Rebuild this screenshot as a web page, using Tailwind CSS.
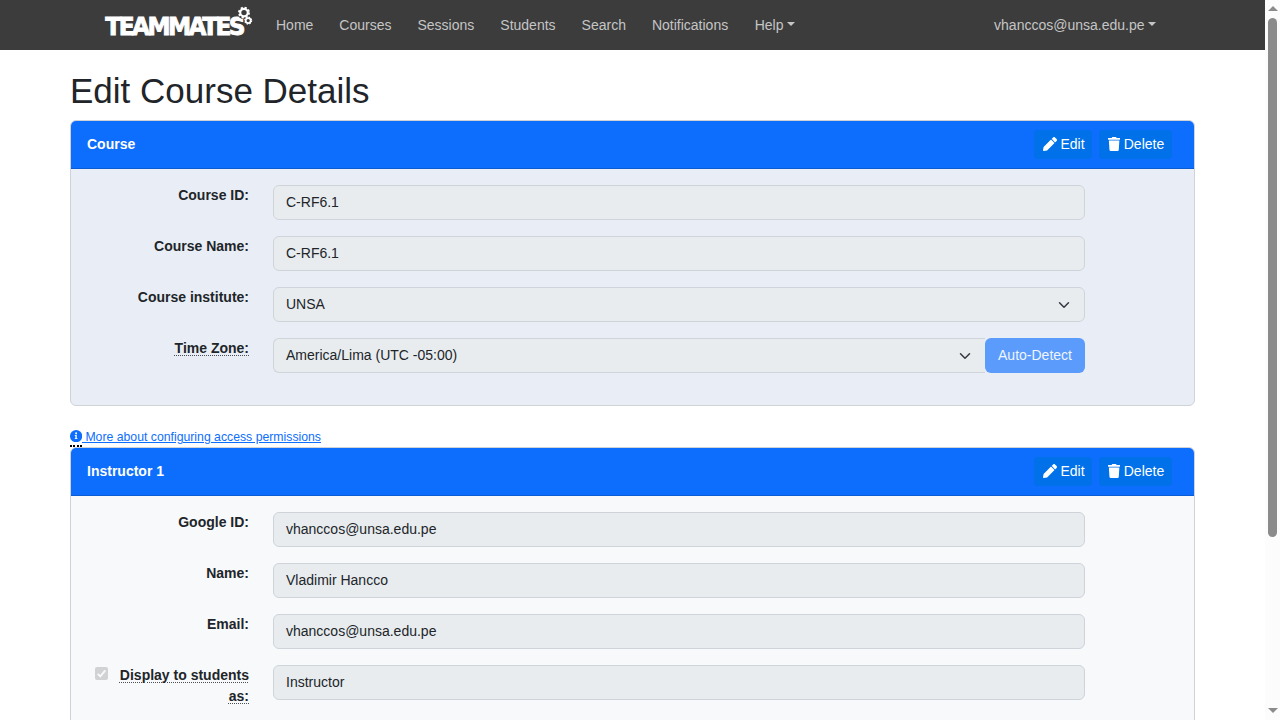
<!DOCTYPE html>
<html lang="en">
<head>
<meta charset="utf-8">
<title>Edit Course Details</title>
<script src="https://cdn.jsdelivr.net/npm/@tailwindcss/browser@4"></script>
</head>
<body class="h-[720px] overflow-hidden bg-white font-['Liberation_Sans',Arial,sans-serif] text-[14px] leading-[21px] text-[#212529]">
<svg class="hidden">
  <symbol id="pencil" viewBox="0 0 512 512"><path fill="currentColor" d="M497.9 142.1l-46.1 46.1c-4.7 4.7-12.3 4.7-17 0l-111-111c-4.7-4.7-4.7-12.3 0-17l46.1-46.1c18.7-18.7 49.1-18.7 67.9 0l60.1 60.1c18.8 18.7 18.8 49.1 0 67.9zM284.2 99.8L21.6 362.4.4 483.9c-2.9 16.4 11.4 30.6 27.8 27.8l121.5-21.3 262.6-262.6c4.7-4.7 4.7-12.3 0-17l-111-111c-4.8-4.7-12.4-4.7-17.1 0z"/></symbol>
  <symbol id="trash" viewBox="0 0 448 512"><path fill="currentColor" d="M432 32H312l-9.4-18.7A24 24 0 0 0 281.1 0H166.8a23.72 23.72 0 0 0-21.4 13.3L136 32H16A16 16 0 0 0 0 48v32a16 16 0 0 0 16 16h416a16 16 0 0 0 16-16V48a16 16 0 0 0-16-16zM53.2 467a48 48 0 0 0 47.9 45h245.8a48 48 0 0 0 47.9-45L416 128H32z"/></symbol>
  <symbol id="chevron" viewBox="0 0 16 16"><path fill="none" stroke="#343a40" stroke-linecap="round" stroke-linejoin="round" stroke-width="2" d="m2 5 6 6 6-6"/></symbol>
</svg>
<div class="flex h-[720px]">
  <div class="flex h-full w-[1265px] flex-col overflow-hidden">
    <nav class="flex h-[50px] shrink-0 items-center bg-[#3c3c3c] pr-[109px] pl-[105px] text-[#c5c5c5]">
      <svg class="mr-6 h-[50px] w-[147px] shrink-0 overflow-visible" viewBox="0 0 147 50">
        <text x=".4" y="35.4" transform="scale(.93 1)" letter-spacing="-2.75" fill="#fff" stroke="#fff" stroke-width=".9" font-family="DejaVu Sans" font-weight="700" font-size="25">TEAMMATES</text>
        <circle cx="139" cy="12.6" r="6.6" fill="#3c3c3c"/>
        <circle cx="143.2" cy="20.6" r="4.4" fill="#3c3c3c"/>
        <g fill="none" stroke="#fff">
          <circle cx="139" cy="12.6" r="3.8" stroke-width="2.2"/>
          <circle cx="139" cy="12.6" r="5.1" stroke-width="1.8" stroke-dasharray="2.2 1.805"/>
          <circle cx="143.2" cy="20.6" r="2.5" stroke-width="1.7"/>
          <circle cx="143.2" cy="20.6" r="3.4" stroke-width="1.3" stroke-dasharray="1.45 1.22"/>
        </g>
      </svg>
      <div class="flex gap-[26px]">
        <a>Home</a><a>Courses</a><a>Sessions</a><a>Students</a><a>Search</a><a>Notifications</a>
        <a class="ml-[.5px] flex items-center gap-[3.5px]">Help<i class="-mt-[2px] border-x-4 border-t-4 border-x-transparent border-t-current"></i></a>
      </div>
      <a class="ml-auto flex items-center gap-[3.5px]">vhanccos@unsa.edu.pe<i class="-mt-[2px] border-x-4 border-t-4 border-x-transparent border-t-current"></i></a>
    </nav>
    <main class="px-[70px] pt-[19px]">
      <h1 class="mb-[7px] text-[35px] leading-[44px]">Edit Course Details</h1>
      <section class="h-[286px] overflow-hidden rounded-[6px] border border-[#cfd2d6] bg-[#e9eef6]">
        <header class="flex h-[48px] items-center border-b border-[#0b5bd3] bg-[#0d6efd] pr-[22px] pl-4 text-white">
          <strong class="-mt-px mr-auto">Course</strong>
          <button class="mr-[7px] flex h-[29px] w-[58px] items-center gap-1 rounded bg-[#0071e9] pb-px pl-[8.5px]"><svg class="h-[14px] w-[14px]"><use href="#pencil"/></svg>Edit</button>
          <button class="flex h-[29px] w-[73px] items-center gap-1 rounded bg-[#0071e9] pb-px pl-[8.5px]"><svg class="h-[14px] w-[12.25px]"><use href="#trash"/></svg>Delete</button>
        </header>
        <div class="grid grid-cols-[162px_812px] gap-x-6 gap-y-4 pt-4 pl-4">
          <label class="text-right font-bold">Course ID:</label>
          <div class="h-[35px] rounded-[6px] border border-[#ced4da] bg-[#e8ecef] px-3 pt-[6px]">C-RF6.1</div>
          <label class="text-right font-bold">Course Name:</label>
          <div class="h-[35px] rounded-[6px] border border-[#ced4da] bg-[#e8ecef] px-3 pt-[6px]">C-RF6.1</div>
          <label class="text-right font-bold">Course institute:</label>
          <div class="flex h-[35px] items-center justify-between rounded-[6px] border border-[#ced4da] bg-[#e8ecef] pr-[14px] pl-3"><span class="-mt-px">UNSA</span><svg class="h-3 w-3"><use href="#chevron"/></svg></div>
          <label class="text-right font-bold"><span class="underline decoration-[#212529]/80 decoration-dotted decoration-1 underline-offset-2">Time Zone:</span></label>
          <div class="flex h-[35px]">
            <div class="flex w-[712px] items-center justify-between rounded-l-[6px] border border-r-0 border-[#ced4da] bg-[#e8ecef] pr-[14px] pl-3"><span class="-mt-px">America/Lima (UTC -05:00)</span><svg class="h-3 w-3"><use href="#chevron"/></svg></div>
            <button class="flex w-[100px] items-center justify-center rounded-[6px] bg-[#5b9bfb] pb-px text-[#eef5ff]">Auto-Detect</button>
          </div>
        </div>
      </section>
      <div class="flex h-[41px] items-start pt-[22px] text-[12.25px] leading-[18px] text-[#0d6efd]">
        <span class="flex h-[19px] w-3 flex-col justify-between border-b-2 border-dotted border-black pt-[2px]"><svg class="h-[12.25px] w-[12.25px]" viewBox="0 0 12 12"><circle cx="6" cy="6" r="6" fill="#0d6efd"/><circle cx="6" cy="3.3" r="1" fill="#fff"/><path fill="#fff" d="M4.7 5h1.9v3h.7v.9H4.7V8h.6V5.9h-.6z"/></svg></span>
        <a class="whitespace-pre underline"> More about configuring access permissions</a>
      </div>
      <section class="h-[300px] overflow-hidden rounded-t-[6px] border border-[#cfd2d6] bg-[#f8f9fb]">
        <header class="flex h-[48px] items-center border-b border-[#0b5bd3] bg-[#0d6efd] pr-[22px] pl-4 text-white">
          <strong class="-mt-px mr-auto">Instructor 1</strong>
          <button class="mr-[7px] flex h-[29px] w-[58px] items-center gap-1 rounded bg-[#0071e9] pb-px pl-[8.5px]"><svg class="h-[14px] w-[14px]"><use href="#pencil"/></svg>Edit</button>
          <button class="flex h-[29px] w-[73px] items-center gap-1 rounded bg-[#0071e9] pb-px pl-[8.5px]"><svg class="h-[14px] w-[12.25px]"><use href="#trash"/></svg>Delete</button>
        </header>
        <div class="grid grid-cols-[162px_812px] gap-x-6 gap-y-4 pt-4 pl-4">
          <label class="text-right font-bold">Google ID:</label>
          <div class="h-[35px] rounded-[6px] border border-[#ced4da] bg-[#e8ecef] px-3 pt-[6px]">vhanccos@unsa.edu.pe</div>
          <label class="text-right font-bold">Name:</label>
          <div class="h-[35px] rounded-[6px] border border-[#ced4da] bg-[#e8ecef] px-3 pt-[6px]">Vladimir Hancco</div>
          <label class="text-right font-bold">Email:</label>
          <div class="h-[35px] rounded-[6px] border border-[#ced4da] bg-[#e8ecef] px-3 pt-[6px]">vhanccos@unsa.edu.pe</div>
          <div class="flex items-start justify-between pl-2">
            <svg class="mt-[2px] h-[13px] w-[13px]" viewBox="0 0 13 13"><rect width="13" height="13" rx="2" fill="#d1d2d3"/><path d="M2.7 6.8l2.6 2.6 5-6" fill="none" stroke="#f8f9fb" stroke-width="1.9"/></svg>
            <label class="w-[132px] text-right font-bold"><span class="underline decoration-[#212529]/80 decoration-dotted decoration-1 underline-offset-2">Display to students as:</span></label>
          </div>
          <div class="h-[35px] rounded-[6px] border border-[#ced4da] bg-[#e8ecef] px-3 pt-[6px]">Instructor</div>
        </div>
      </section>
    </main>
  </div>
  <div class="flex h-full w-[15px] flex-col items-center bg-[#fcfcfc] pt-[6px] pb-[7px]">
    <i class="border-x-[5px] border-b-[5px] border-x-transparent border-b-[#8b8b8b]"></i>
    <div class="mt-[7px] h-[519px] w-[9px] rounded-full bg-[#8b8b8b]"></div>
    <i class="mt-auto border-x-[5px] border-t-[5px] border-x-transparent border-t-[#8b8b8b]"></i>
  </div>
</div>
</body>
</html>
